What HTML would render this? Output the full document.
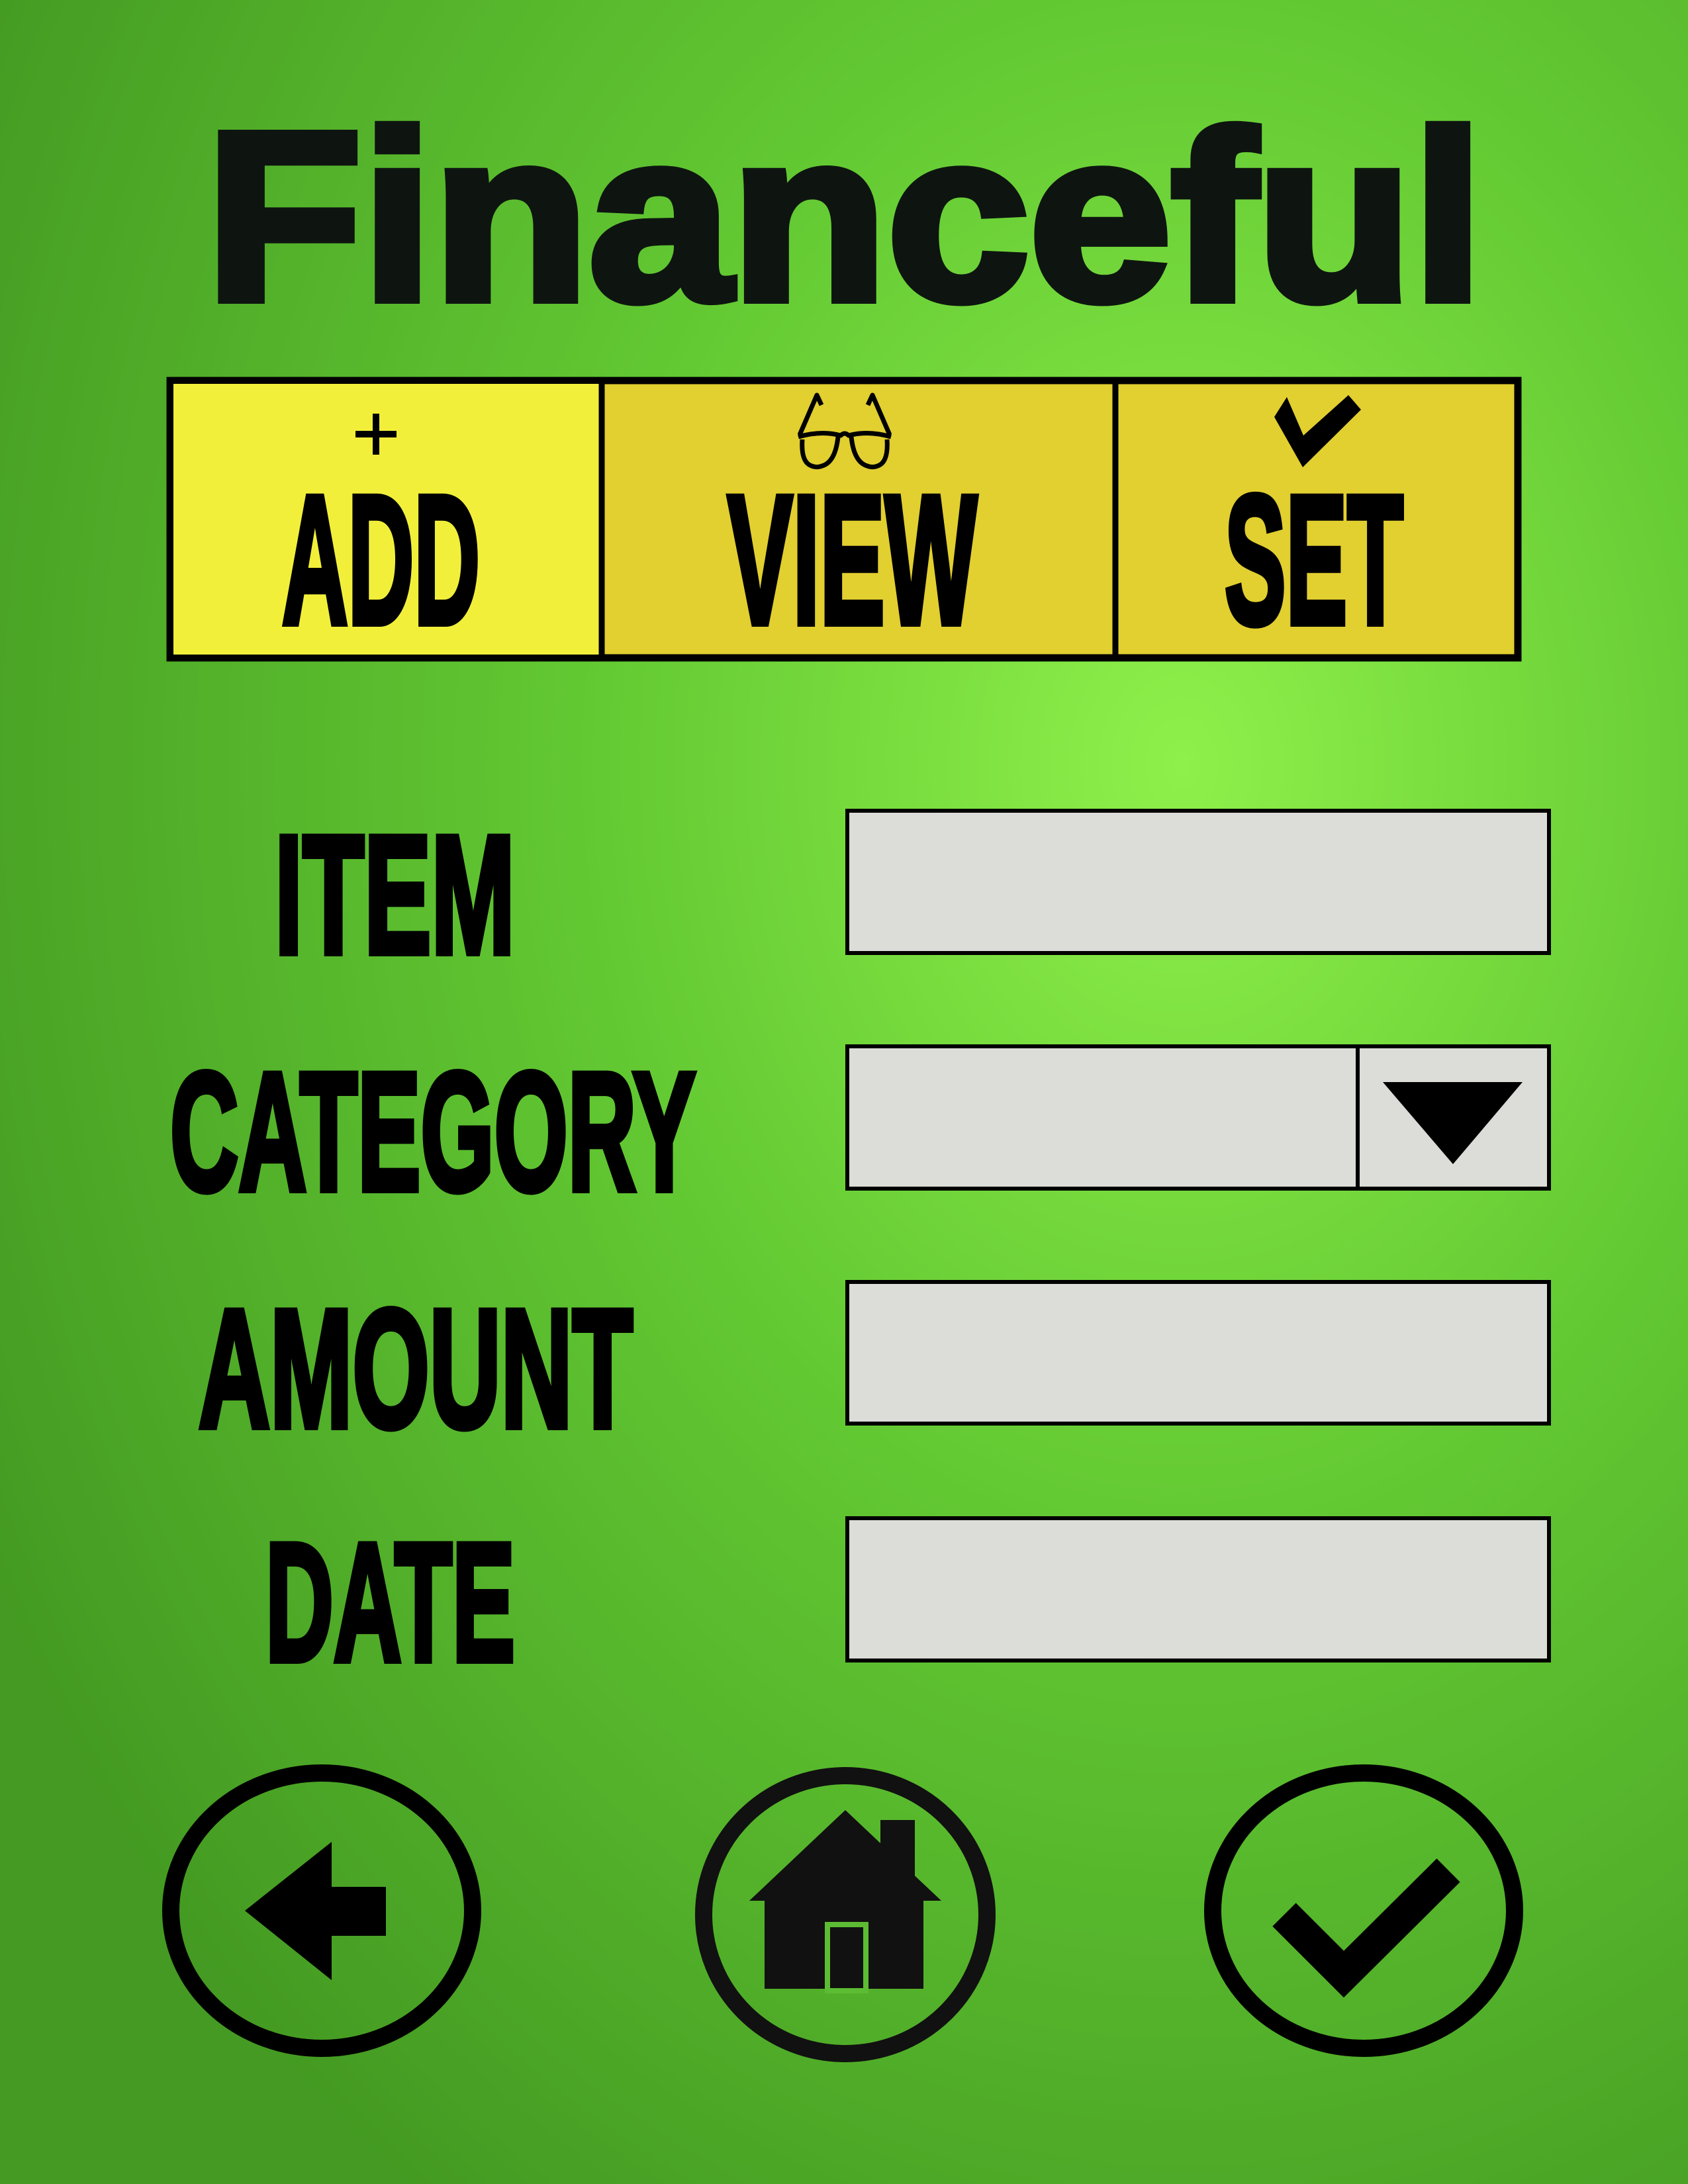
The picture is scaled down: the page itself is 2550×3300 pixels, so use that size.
<!DOCTYPE html>
<html><head><meta charset="utf-8"><style>
html,body{margin:0;padding:0;width:2550px;height:3300px;overflow:hidden}
svg{display:block}
</style></head><body>
<svg width="2550" height="3300" viewBox="0 0 2550 3300" xmlns="http://www.w3.org/2000/svg">
<defs>
<radialGradient id="bg" cx="0.7" cy="0.35" r="0.8">
<stop offset="0" stop-color="#8ef04a"/>
<stop offset="0.45" stop-color="#62c832"/>
<stop offset="1" stop-color="#449a22"/>
</radialGradient>
</defs>
<rect width="2550" height="3300" fill="url(#bg)"/>
<g font-family="Liberation Sans, sans-serif" font-weight="bold" fill="#0e1510">
<text x="311" y="452" font-size="362" textLength="1930" lengthAdjust="spacingAndGlyphs" stroke="#0e1510" stroke-width="14">Financeful</text>
</g>
<!-- tabs -->
<rect x="257" y="575" width="2036" height="419" fill="#e2cf30" stroke="#000" stroke-width="11"/>
<rect x="262" y="580" width="645" height="409" fill="#f2ef3a"/>
<line x1="909" y1="575" x2="909" y2="994" stroke="#000" stroke-width="9"/>
<line x1="1685" y1="575" x2="1685" y2="994" stroke="#000" stroke-width="9"/>
<path d="M568 625v62M537 656h62" stroke="#000" stroke-width="10"/>
<g fill="none" stroke="#000" stroke-width="7" stroke-linejoin="round">
<path d="M1208 657l26-60 7 15M1344 657l-26-60-7 15"/>
<path d="M1206 660q35-10 64-2q6-6 12 0q29-8 64 2"/>
<path d="M1212 664q-2 30 10 38q10 6 20 2q20-6 24-44M1340 664q2 30-10 38q-10 6-20 2q-20-6-24-44"/>
</g>
<polygon points="1925,630 1944,600 1969,658 2037,597 2056,619 1968,706" fill="#000"/>
<g font-family="Liberation Sans, sans-serif" font-weight="bold" fill="#000" stroke="#000" stroke-width="10">
<text x="426" y="942" font-size="278" textLength="299" lengthAdjust="spacingAndGlyphs">ADD</text>
<text x="1099" y="942" font-size="278" textLength="377" lengthAdjust="spacingAndGlyphs">VIEW</text>
<text x="1850" y="942" font-size="278" textLength="270" lengthAdjust="spacingAndGlyphs">SET</text>
<text x="415" y="1440" font-size="255" textLength="363" lengthAdjust="spacingAndGlyphs">ITEM</text>
<text x="257" y="1798" font-size="255" textLength="794" lengthAdjust="spacingAndGlyphs">CATEGORY</text>
<text x="300" y="2156" font-size="255" textLength="656" lengthAdjust="spacingAndGlyphs">AMOUNT</text>
<text x="401" y="2509" font-size="255" textLength="377" lengthAdjust="spacingAndGlyphs">DATE</text>
</g>
<g fill="#dcdcd8" stroke="#000" stroke-width="6">
<rect x="1280" y="1225" width="1060" height="215"/>
<rect x="1280" y="1581" width="1060" height="215"/>
<rect x="1280" y="1937" width="1060" height="214"/>
<rect x="1280" y="2294" width="1060" height="215"/>
</g>
<line x1="2051" y1="1581" x2="2051" y2="1796" stroke="#000" stroke-width="6"/>
<polygon points="2089,1635 2300,1635 2195,1759" fill="#000"/>
<!-- bottom buttons -->
<g fill="none" stroke="#000" stroke-width="26">
<ellipse cx="486" cy="2887" rx="228" ry="208"/>
<ellipse cx="1277" cy="2893" rx="214" ry="210" stroke="#111"/>
<ellipse cx="2060" cy="2887" rx="228" ry="208"/>
</g>
<polygon points="370,2887 501,2783 501,2851 583,2851 583,2925 501,2925 501,2992" fill="#000"/>
<g fill="#111">
<polygon points="1277,2735 1132,2872 1422,2872"/>
<rect x="1330" y="2750" width="52" height="110"/>
<rect x="1155" y="2870" width="240" height="135"/>
</g>
<rect x="1250" y="2908" width="58" height="100" fill="none" stroke="#5cbc33" stroke-width="8"/>
<polyline points="1940,2893 2030,2983 2188,2826" fill="none" stroke="#000" stroke-width="50"/>
</svg>
</body></html>
